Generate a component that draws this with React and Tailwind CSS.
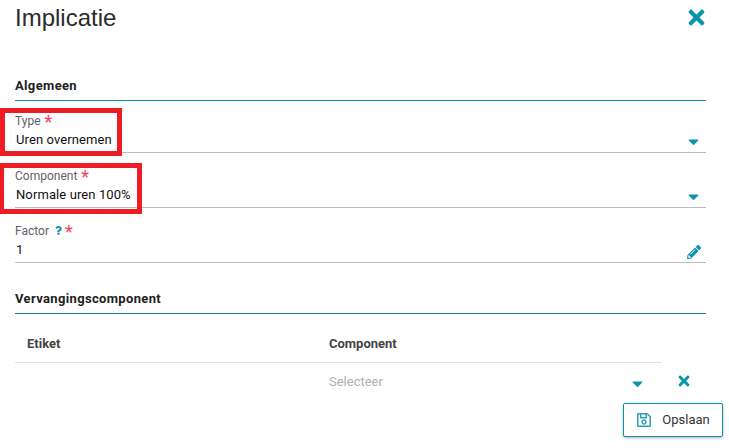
import React from 'react';
import { FaTimes, FaCaretDown, FaPencilAlt, FaQuestion, FaRegSave } from 'react-icons/fa';

const Required = () => (
  <span className="text-[#f0405f] text-[18px] leading-[12px] ml-[4px] relative top-[1px]">*</span>
);

// Label + value + grey underline
const Field = ({ label, value, icon, hint, className }) => (
  <div className={`border-b border-[#bdbdbd] flex flex-col ${className}`}>
    <div className="h-[19px] flex items-center text-[12px] text-[#5f6368]">
      <span>{label}</span>
      {hint}
      <Required />
    </div>
    <div className="h-[19px] flex items-center justify-between text-[13px] text-[#111]">
      <span className="tracking-[0.1px] ml-[1px]">{value}</span>
      {icon}
    </div>
  </div>
);

const Caret = () => <FaCaretDown className="text-[#0a93ac] text-[17px] mr-[4px] mt-[3px]" />;

const SectionTitle = ({ children, className }) => (
  <div className={`h-[31px] pt-[2px] flex items-center font-bold text-[13px] tracking-[0.35px] text-[#222] border-b ${className}`}>{children}</div>
);

const App = () => {
  return (
    <div className="relative w-[729px] h-[448px] bg-white overflow-hidden font-['Roboto',sans-serif]">
      <div className="pl-[15px] pr-[23px]">
        <div className="h-[36px] flex items-center justify-between">
          <h1 className="text-[24px] text-[#2b2b2b] font-['Liberation_Sans',sans-serif] leading-none">Implicatie</h1>
          <FaTimes className="text-[#0a93ac] text-[23px] mr-[-2px] mt-[-2px]" />
        </div>

        <SectionTitle className="mt-[34px] border-[#0a93ac]">Algemeen</SectionTitle>

        <Field className="h-[52px] pt-[10px]" label="Type" value="Uren overnemen" icon={<Caret />} />
        <Field className="h-[55px] pt-[13px]" label="Component" value="Normale uren 100%" icon={<Caret />} />
        <Field
          className="h-[55px] pt-[13px]"
          label="Factor"
          value="1"
          hint={<FaQuestion className="text-[#0a93ac] text-[9px] ml-[5px] mr-[-2px]" />}
          icon={<FaPencilAlt className="text-[#0a93ac] text-[14px] mr-[5px] mt-[5px]" />}
        />

        <SectionTitle className="mt-[20px] border-[#1a7d90]">Vervangingscomponent</SectionTitle>

        <div className="mt-[10px] flex">
          <div className="w-[647px]">
            <div className="h-[39px] pt-[2px] flex items-center border-b border-[#e2e2e2] font-bold text-[13px] text-[#444]">
              <div className="w-[314px] pl-[12px]">Etiket</div>
              <div>Component</div>
            </div>
            <div className="h-[38px] flex items-center justify-between text-[13px] text-[#b0b0b0]">
              <span className="ml-[314px]">Selecteer</span>
              <FaCaretDown className="text-[#0a93ac] text-[17px] mr-[16px] mt-[2px]" />
            </div>
          </div>
          <div className="flex-1 pt-[37px] h-[77px] flex items-center justify-center">
            <FaTimes className="text-[#0a93ac] text-[16px]" />
          </div>
        </div>
      </div>

      {/* opslaan button floats over the form */}
      <button className="absolute left-[623px] top-[403px] w-[100px] h-[34px] flex items-center justify-center gap-[10px] bg-white border border-[#0a93ac] rounded-[2px] shadow-[0_1px_3px_rgba(0,0,0,0.3)] text-[13px] text-[#333]">
        <FaRegSave className="text-[#2f9fb5] text-[16px]" />
        <span>Opslaan</span>
      </button>

      {/* red annotation boxes from the screenshot */}
      <div className="absolute left-0 top-[108px] w-[122px] h-[48px] border-[5px] border-[#ee1c25]" />
      <div className="absolute left-0 top-[163px] w-[142px] h-[51px] border-[5px] border-l-[4px] border-[#ee1c25]" />
    </div>
  );
};

export default App;
